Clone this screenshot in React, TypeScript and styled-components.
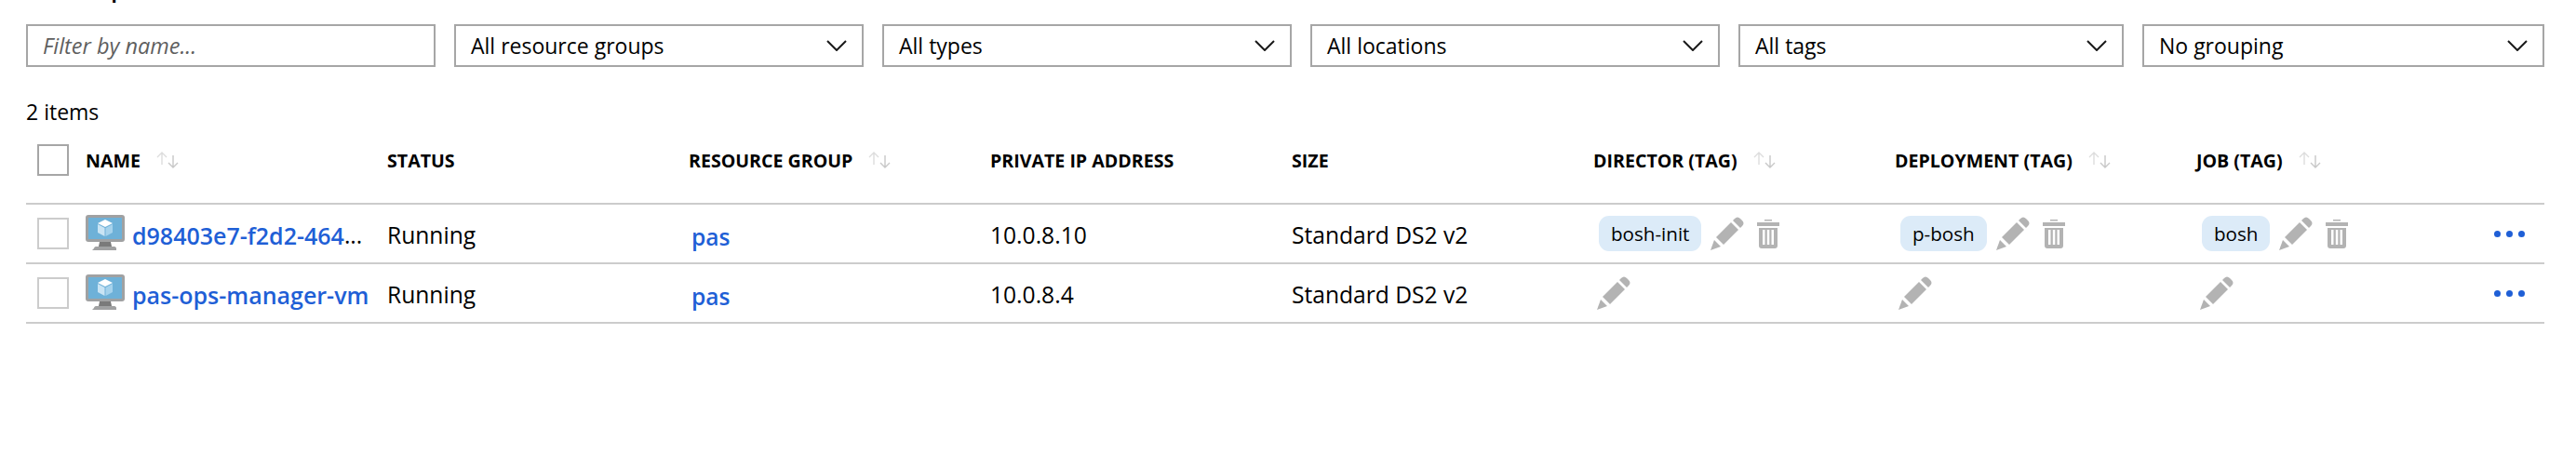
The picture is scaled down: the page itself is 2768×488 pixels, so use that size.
import React from "react";
import styled, { createGlobalStyle } from "styled-components";

const GlobalStyle = createGlobalStyle`
  html, body {
    margin: 0;
    background: #ffffff;
  }
  body {
    font-family: "Open Sans", "Liberation Sans", sans-serif;
    color: #000000;
  }
`;

const Page = styled.div`
  height: 488px;
  overflow: hidden;
  padding: 0 34px 0 28px;
`;

const ClippedTitle = styled.div`
  height: 6px;
  overflow: hidden;
`;

const TitleText = styled.div`
  margin-top: -28px;
  font-size: 26px;
  font-weight: 600;
  line-height: 30px;
  white-space: nowrap;
`;

const FilterBar = styled.div`
  display: flex;
  gap: 20px;
  margin-top: 20px;
`;

const FilterInput = styled.input`
  box-sizing: border-box;
  width: 440px;
  height: 46px;
  padding: 0 16px;
  border: 2px solid #a6a6a6;
  border-radius: 0;
  outline: none;
  font-family: inherit;
  font-size: 23.5px;
  font-style: italic;

  &::placeholder {
    color: #5f5f5f;
    opacity: 1;
  }
`;

const Dropdown = styled.div<{ $width: number }>`
  box-sizing: border-box;
  display: flex;
  align-items: center;
  justify-content: space-between;
  width: ${(p) => p.$width}px;
  height: 46px;
  padding: 0 16px;
  border: 2px solid #a6a6a6;
  font-size: 23px;
`;

const ItemCount = styled.div`
  height: 32px;
  margin-top: 32px;
  font-size: 23px;
  line-height: 32px;
`;

const Row = styled.div`
  display: grid;
  grid-template-columns: 64px repeat(7, 324px) 300px 1fr;
  align-items: center;
  border-bottom: 2px solid #cccccc;
`;

const HeaderRow = styled(Row)`
  height: 72px;
  padding-bottom: 10px;
`;

const BodyRow = styled(Row)`
  height: 62px;
`;

const Check = styled.div<{ $strong?: boolean }>`
  box-sizing: border-box;
  width: 34px;
  height: 34px;
  margin-left: 12px;
  border: 2px solid ${(p) => (p.$strong ? "#a6a6a6" : "#cccccc")};
`;

const HeaderCell = styled.div`
  display: flex;
  align-items: center;
  gap: 17px;
  font-size: 19.6px;
  font-weight: 700;
  white-space: nowrap;
`;

const Cell = styled.div`
  display: flex;
  align-items: center;
  font-size: 24.6px;
  white-space: nowrap;
`;

const TextCell = styled(Cell)`
  padding-top: 3px;
`;

const NameLink = styled.a`
  margin: 3px 0 0 8px;
  color: #1f5fd6;
  font-size: 25px;
  font-weight: 600;
  cursor: pointer;
`;

const Ellipsis = styled.span`
  margin-top: 3px;
`;

const GroupLink = styled.a`
  margin: 6px 0 0 3px;
  color: #1f5fd6;
  font-weight: 600;
  cursor: pointer;
`;

const Tag = styled.span`
  display: flex;
  align-items: center;
  height: 38px;
  margin: 0 10px 0 6px;
  padding: 0 13px;
  border-radius: 11px;
  background: #dcebf8;
  font-size: 20.6px;
`;

const EditButton = styled.span<{ $alone?: boolean }>`
  display: flex;
  margin-left: ${(p) => (p.$alone ? "4px" : "0")};
`;

const TrashButton = styled.span`
  display: flex;
  margin-left: 14px;
`;

const MoreDots = styled.div`
  display: flex;
  gap: 6px;
  margin-left: 20px;
`;

const Dot = styled.span`
  width: 7px;
  height: 7px;
  border-radius: 50%;
  background: #1f5fd6;
`;

const Chevron = () => (
  <svg width="22" height="12" viewBox="0 0 22 12" fill="none" stroke="#1a1a1a" strokeWidth="2">
    <polyline points="1,1 11,11 21,1" />
  </svg>
);

const SortArrows = () => (
  <svg width="24" height="18" viewBox="0 0 24 18" fill="none" strokeWidth="1.4">
    <path d="M6 14V1M1 6l5-5 5 5" stroke="#dddddd" />
    <path d="M18 4v13M13 12l5 5 5-5" stroke="#c8c8c8" />
  </svg>
);

const VmIcon = () => (
  <svg width="42" height="40" viewBox="0 0 42 40">
    <rect x="0" y="0" width="42" height="29" rx="3" fill="#a0a1a2" />
    <rect x="3" y="3" width="36" height="23" fill="#6eb1d8" />
    <path d="M15 29h12l1 5H14z" fill="#7a7a7a" />
    <path d="M9 36c0-1 1-2 2-2h20c1 0 2 1 2 2v2H7v-0z" fill="#a0a1a2" />
    <path d="M21 5l8 4-8 4-8-4z" fill="#ffffff" />
    <path d="M13 10l7.500 4v9l-7.500-4z" fill="#c9e4f4" />
    <path d="M29 10l-7.500 4v9l7.500-4z" fill="#a5d2ec" />
  </svg>
);

const PencilIcon = () => (
  <svg width="36" height="36" viewBox="0 0 36 36" fill="#b3b3b3">
    <path d="M0 36l4-11 7 7z" />
    <path d="M6 22L22 6l8 8-16 16z" />
    <path d="M24 4l2-2c2-2 4-2 6 0l2 2c2 2 2 4 0 6l-2 2z" />
  </svg>
);

const TrashIcon = () => (
  <svg width="24" height="31" viewBox="0 0 24 31" fill="#b3b3b3">
    <rect x="8" y="0" width="8" height="1.500" />
    <rect x="0" y="3" width="24" height="4" />
    <path d="M2 9h20v19c0 2-1 3-3 3H5c-2 0-3-1-3-3z" />
    <rect x="6" y="11" width="2.500" height="16" fill="#ffffff" />
    <rect x="10.800" y="11" width="2.500" height="16" fill="#ffffff" />
    <rect x="15.500" y="11" width="2.500" height="16" fill="#ffffff" />
  </svg>
);

const filters = [
  { label: "All resource groups", width: 440 },
  { label: "All types", width: 440 },
  { label: "All locations", width: 440 },
  { label: "All tags", width: 414 },
  { label: "No grouping", width: 432 },
];

const columns = [
  { label: "NAME", sortable: true },
  { label: "STATUS", sortable: false },
  { label: "RESOURCE GROUP", sortable: true },
  { label: "PRIVATE IP ADDRESS", sortable: false },
  { label: "SIZE", sortable: false },
  { label: "DIRECTOR (TAG)", sortable: true },
  { label: "DEPLOYMENT (TAG)", sortable: true },
  { label: "JOB (TAG)", sortable: true },
];

const vms = [
  { name: "d98403e7-f2d2-464", cut: true, ip: "10.0.8.10", tags: ["bosh-init", "p-bosh", "bosh"] },
  { name: "pas-ops-manager-vm", cut: false, ip: "10.0.8.4", tags: [] as string[] },
];

const App: React.FC = () => {
  return (
    <Page>
      <GlobalStyle />
      <ClippedTitle>
        <TitleText>Subscription resource status</TitleText>
      </ClippedTitle>
      <FilterBar>
        <FilterInput placeholder="Filter by name..." />
        {filters.map((f) => (
          <Dropdown key={f.label} $width={f.width}>
            {f.label}
            <Chevron />
          </Dropdown>
        ))}
      </FilterBar>
      <ItemCount>2 items</ItemCount>
      <HeaderRow>
        <Check $strong />
        {columns.map((c) => (
          <HeaderCell key={c.label}>
            {c.label}
            {c.sortable && <SortArrows />}
          </HeaderCell>
        ))}
      </HeaderRow>
      {vms.map((vm) => (
        <BodyRow key={vm.name}>
          <Check />
          <Cell>
            <VmIcon />
            <NameLink>{vm.name}</NameLink>
            {vm.cut && <Ellipsis>...</Ellipsis>}
          </Cell>
          <TextCell>Running</TextCell>
          <Cell>
            <GroupLink>pas</GroupLink>
          </Cell>
          <TextCell>{vm.ip}</TextCell>
          <TextCell>Standard DS2 v2</TextCell>
          {[0, 1, 2].map((i) => (
            <Cell key={i}>
              {vm.tags[i] ? (
                <>
                  <Tag>{vm.tags[i]}</Tag>
                  <EditButton>
                    <PencilIcon />
                  </EditButton>
                  <TrashButton>
                    <TrashIcon />
                  </TrashButton>
                </>
              ) : (
                <EditButton $alone>
                  <PencilIcon />
                </EditButton>
              )}
            </Cell>
          ))}
          <MoreDots>
            <Dot />
            <Dot />
            <Dot />
          </MoreDots>
        </BodyRow>
      ))}
    </Page>
  );
};

export default App;
